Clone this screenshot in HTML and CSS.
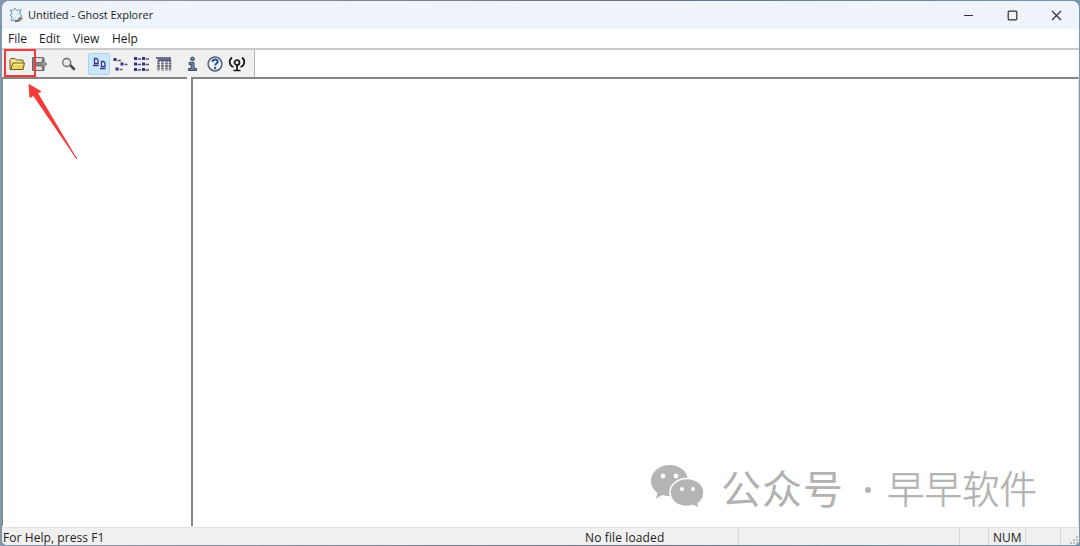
FILE: index.html
```html
<!DOCTYPE html>
<html lang="en">
<head>
  <meta charset="UTF-8" />
  <meta name="viewport" content="width=device-width, initial-scale=1" />
  <title>Untitled - Ghost Explorer</title>
  <link rel="stylesheet" href="styles.css">
</head>
<body>

  <div class="window">
    <header class="titlebar">
      <svg class="app-icon" width="16" height="16" viewBox="0 0 16 16">
        <path d="M2 3l3 .5L7 1l2 2.500 4-1-1 4 2 3-3 1.500L9 15l-2-2-4 1 1-4-2-2 2-1.500z" fill="#d5e9f3" stroke="#789caf" stroke-width="1"/>
        <path d="M5 5l3 1 2-1M5 9l3-1 2 2" fill="none" stroke="#f8fdff" stroke-width="1.500"/>
        <path d="M7 14.500l4-1 2-3" fill="none" stroke="#53656f" stroke-width="1.800"/>
        <path d="M11.500 14l3-3" stroke="#c98a55" stroke-width="1.400"/>
      </svg>
      <span class="title">Untitled - Ghost Explorer</span>
      <div class="controls">
        <svg width="11" height="11" viewBox="0 0 11 11"><path d="M1 5.500h9"/></svg>
        <svg width="11" height="11" viewBox="0 0 11 11"><rect x="1.200" y="1.200" width="8.600" height="8.600" rx="1"/></svg>
        <svg width="11" height="11" viewBox="0 0 11 11"><path d="M1 1l9 9M10 1l-9 9"/></svg>
      </div>
    </header>

    <nav class="menu">
      <span class="file">File</span>
      <span class="edit">Edit</span>
      <span class="view">View</span>
      <span class="help">Help</span>
    </nav>

    <div class="toolbar-row">
      <div class="toolbar">
        <button class="tool open">
          <svg width="18" height="16" viewBox="0 0 18 16">
            <path d="M2 13.500V4l1-1.500h4L8.500 4H15v9.500z" fill="#f4e48a" stroke="#6b5b1d"/>
            <path d="M2.500 13.500L5 7h11.500L15 13.500z" fill="#ead45f" stroke="#6b5b1d"/>
            <path d="M5.700 8.300h9" stroke="#fff3a5"/>
          </svg>
        </button>
        <button class="tool extract">
          <svg width="18" height="16" viewBox="0 0 18 16">
            <path d="M2.500 1.500h11l.5 1v12H2.500z" fill="#858585" stroke="#666"/>
            <path d="M5 2h7v4H5zM5 10.500h7V14H5z" fill="#dedede"/>
            <path d="M6 7h6V4.500L17 8l-5 3.500V9H6z" fill="#9a9a9a" stroke="#666" stroke-width=".8"/>
          </svg>
        </button>
        <button class="tool search">
          <svg width="18" height="16" viewBox="0 0 18 16">
            <path d="M11.500 9.500l3.500 3.500" stroke="#484848" stroke-width="2.600" stroke-linecap="round"/>
            <circle cx="7.700" cy="6.500" r="4" fill="#e5e7e8" stroke="#666" stroke-width="1.300"/>
            <path d="M6 6q1-2 3-1.500" fill="none" stroke="#fff"/>
          </svg>
        </button>
        <button class="tool large active">
          <svg width="18" height="16" viewBox="0 0 18 16" fill="none" stroke="#34348f">
            <path d="M4.500 2.500h2L8 4v3.500H4.500zM11.500 5.500h2L15 7v3.500h-3.500z" fill="#e4effc" stroke-width="1.300"/>
            <path d="M3 9.500h5.500M10 12.500h5.500" stroke-width="1.300"/>
          </svg>
        </button>
        <button class="tool small">
          <svg width="18" height="16" viewBox="0 0 18 16">
            <path d="M1.500 2h3v3h-3zM8.500 6.500h3v3h-3zM3.500 11.500h3v3h-3z" fill="#33338c"/>
            <path d="M5.500 4.500H9M12.500 8.500h3M7.500 13.500h3" stroke="#555577" stroke-width="1.500"/>
          </svg>
        </button>
        <button class="tool list">
          <svg width="18" height="16" viewBox="0 0 18 16">
            <path d="M1 1h3v3H1zM9 1h3v3H9zM1 6.500h3v3H1zM9 6.500h3v3H9zM1 12h3v3H1zM9 12h3v3H9z" fill="#33338c"/>
            <path d="M4.500 3h3.500M12.500 3H16M4.500 8.500h3.500M12.500 8.500H16M4.500 14h3.500M12.500 14H16" stroke="#555577" stroke-width="1.500"/>
          </svg>
        </button>
        <button class="tool details">
          <svg width="18" height="16" viewBox="0 0 18 16">
            <path d="M1 2h15" stroke="#46467e" stroke-width="1.600"/>
            <path d="M3 4h13" stroke="#30306a" stroke-width="1.600"/>
            <path d="M3.500 4.500V14.500M7.500 4.500V14.500M11.500 4.500V14.500M15 4.500V14.500" stroke="#666673" stroke-width="2.600" stroke-dasharray="1.800 .5"/>
          </svg>
        </button>
        <button class="tool info">
          <svg width="18" height="16" viewBox="0 0 18 16">
            <circle cx="8.500" cy="3" r="1.900" fill="#6687ad" stroke="#3c4c60"/>
            <path d="M5 6.500h5v6h2.500v2H4.500v-2H7v-4H5z" fill="#6687ad" stroke="#3c4c60"/>
          </svg>
        </button>
        <button class="tool about">
          <svg width="18" height="16" viewBox="0 0 18 16">
            <circle cx="9" cy="8" r="6.900" fill="#f0f5fb" stroke="#526079" stroke-width="1.500"/>
            <path d="M6.500 6c0-3.500 5.500-3.200 5.200 0-.2 1.500-2.500 1.700-2.500 3.500" fill="none" stroke="#274f99" stroke-width="2"/>
            <circle cx="9.100" cy="12" r="1.200" fill="#274f99"/>
          </svg>
        </button>
        <button class="tool antenna">
          <svg width="18" height="16" viewBox="0 0 18 16" fill="none" stroke="#161616" stroke-width="1.700">
            <circle cx="9" cy="6.500" r="2.500"/>
            <path d="M9 9v5M5.500 14.500h7M5.500 11c-4.500-1.500-5-7-1.500-9.500M12.500 11c4.500-1.500 5-7 1.500-9.500"/>
          </svg>
        </button>
      </div>
    </div>

    <main class="panes">
      <section class="tree"></section>
      <section class="files"></section>
    </main>

    <footer class="status">
      <span class="message">For Help, press F1</span>
      <span class="loaded">No file loaded</span>
      <span class="cell wide"></span>
      <span class="cell caps"></span>
      <span class="cell num">NUM</span>
      <span class="cell scroll"></span>
      <span class="cell grip">
        <svg width="10" height="10" viewBox="0 0 10 10"><path d="M7 1h2v2H7zM4 4h2v2H4zM7 4h2v2H7zM1 7h2v2H1zM4 7h2v2H4zM7 7h2v2H7z" fill="#bcbcbc"/></svg>
      </span>
    </footer>
  </div>

  <div class="highlight"></div>
  <svg class="arrow" width="52" height="78" viewBox="0 0 52 78">
    <path d="M1 .5l12 7-3.500 1.500L48.800 75 5.500 11.500 2 13.500z" fill="#f53838" stroke="#f53838" stroke-width=".9" stroke-linejoin="round"/>
  </svg>

  <div class="watermark">
    <svg width="54" height="46" viewBox="0 0 54 46">
      <path d="M19.500 1C9 1 1 8 1 17c0 5 2.500 9 6.500 12L6 34.500l6.500-3.500c2 .7 4.500 1 7 1 10.500 0 18.500-7 18.500-15.500S30 1 19.500 1z" fill="#b5b5b5"/>
      <path d="M37 14.500c-9.500 0-17 6-17 14s7.500 14 17 14c2 0 4-.3 6-1l7 3-2-5c4-2.700 6-6.500 6-11 0-8-7.500-14-17-14z" fill="#b5b5b5" stroke="#fff" stroke-width="1.500"/>
      <g fill="#fff"><circle cx="13" cy="12" r="2.400"/><circle cx="26" cy="12" r="2.400"/><circle cx="32" cy="25" r="2"/><circle cx="43" cy="25" r="2"/></g>
    </svg>
    <span class="channel" lang="zh">公众号</span>
    <span class="dot"></span>
    <span class="name" lang="zh">早早软件</span>
  </div>

</body>
</html>
```
FILE: styles.css
```css
html, body {
  height: 100%;
  margin: 0;
}

body {
  box-sizing: border-box;
  padding: 1px 1px 1px 2px;
  overflow: hidden;
  background: linear-gradient(90deg, #8297ac, #8d96a1 10%, #69717d 60%, #7298b4);
  font-family: "Open Sans", "Noto Sans", sans-serif;
  color: #1c1c1c;
}

.window {
  display: flex;
  flex-direction: column;
  height: 544px;
  overflow: hidden;
  border-radius: 7px 7px 5px 5px;
  background: #fff;
}

.titlebar {
  display: flex;
  align-items: center;
  height: 28px;
  flex-shrink: 0;
  padding-left: 6px;
  background: #eff4fa;
}

.title {
  margin-left: 4px;
  font-size: 11px;
  line-height: 28px;
  letter-spacing: -0.07px;
  white-space: nowrap;
}

.controls {
  display: flex;
  gap: 33px;
  margin-left: auto;
  padding-right: 17px;
}

.controls svg {
  fill: none;
  stroke: #303030;
  stroke-width: 1.2;
}

.menu {
  display: flex;
  height: 19px;
  flex-shrink: 0;
  padding-left: 6px;
  font-size: 12px;
  line-height: 20px;
}

.file {
  width: 31px;
}

.edit {
  width: 34px;
}

.view {
  width: 39px;
}

.toolbar-row {
  height: 27px;
  flex-shrink: 0;
  border-top: 2px solid #cacaca;
}

.toolbar {
  box-sizing: border-box;
  display: flex;
  align-items: center;
  width: 253px;
  height: 27px;
  padding-left: 4px;
  background: #f0f0f0;
  border-right: 1px solid #b6b6b6;
}

.tool {
  box-sizing: border-box;
  display: flex;
  align-items: center;
  justify-content: center;
  flex-shrink: 0;
  width: 22px;
  height: 22px;
  padding: 0;
  border: 1px solid transparent;
  border-radius: 2px;
  background: none;
}

.search {
  margin-left: 7px;
}

.large {
  margin-left: 9px;
}

.tool.active {
  border-color: #a8d5f5;
  background: #cce6fb;
}

.list, .small {
  width: 21px;
}

.details {
  width: 23px;
}

.info {
  margin-left: 7px;
}

.panes {
  display: flex;
  flex: 1;
  gap: 4px;
  padding-bottom: 1px;
}

.tree {
  box-sizing: border-box;
  width: 185px;
  border: solid #858585;
  border-width: 2px 0 0 1px;
}

.files {
  flex: 1;
  border: solid #858585;
  border-width: 2px 0 0 2px;
  border-right: 1px solid #e5e5e5;
}

.status {
  box-sizing: border-box;
  display: flex;
  height: 18px;
  flex-shrink: 0;
  border-top: 1px solid #e1e1e1;
  background: #f0f0f0;
  font-size: 12px;
  line-height: 19px;
}

.message {
  width: 582px;
  padding-left: 1px;
  letter-spacing: 0.07px;
}

.loaded {
  width: 153px;
  letter-spacing: 0.12px;
}

.cell {
  box-sizing: border-box;
  border-left: 1px solid #d7d7d7;
}

.wide {
  width: 221px;
}

.caps {
  width: 29px;
}

.num {
  width: 37px;
  padding-left: 4px;
}

.scroll {
  width: 35px;
}

.grip {
  display: flex;
  flex: 1;
  align-items: flex-end;
  justify-content: flex-end;
}

/* overlays */
.highlight {
  box-sizing: border-box;
  position: absolute;
  left: 4px;
  top: 49px;
  width: 32px;
  height: 28px;
  border: 2px solid #ef3b3b;
}

.arrow {
  position: absolute;
  left: 28px;
  top: 84px;
}

.watermark {
  position: absolute;
  left: 650px;
  top: 464px;
  display: flex;
  align-items: center;
  height: 46px;
  color: #b2b2b2;
  font-family: "Noto Sans CJK SC", sans-serif;
  line-height: 46px;
  white-space: nowrap;
}

.channel {
  margin-left: 17px;
  font-size: 40px;
  letter-spacing: 1px;
}

.dot {
  width: 6px;
  height: 6px;
  margin: 6px 16px 0 21px;
  border-radius: 50%;
  background: #b2b2b2;
}

.name {
  font-size: 37.5px;
  font-weight: 300;
  -webkit-text-stroke: 0.5px #b2b2b2;
}
```
